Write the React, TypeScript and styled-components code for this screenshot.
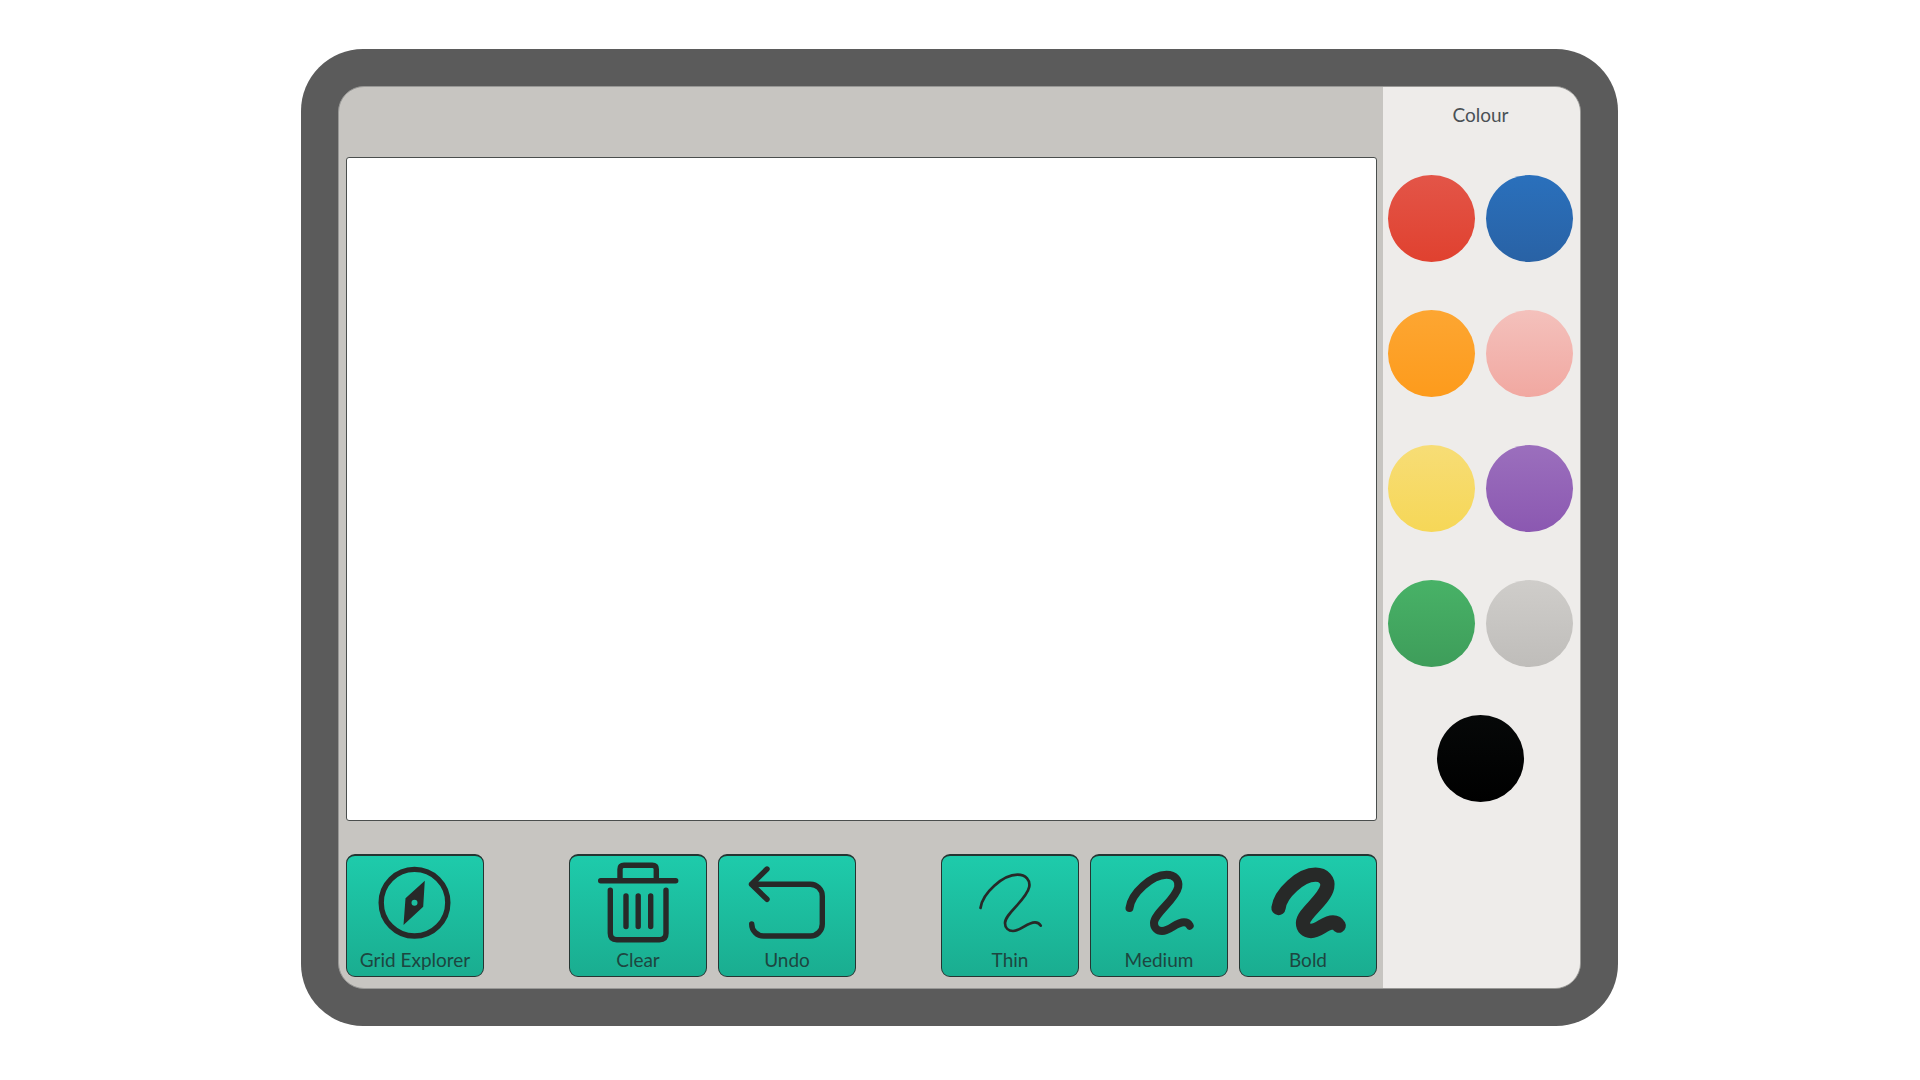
import React from "react";
import styled, { createGlobalStyle } from "styled-components";

const GlobalStyle = createGlobalStyle`
  *, *::before, *::after { box-sizing: border-box; }
  body {
    margin: 0;
    background: #fff;
    font-family: Lato, "Liberation Sans", sans-serif;
    font-size: 19px;
    line-height: 24px;
  }
`;

const Page = styled.main`
  display: flex;
  justify-content: center;
  min-height: 100vh;
  padding: 49px 25px 54px 24px;
`;

const Device = styled.div`
  display: flex;
  width: 100%;
  max-width: 1317px;
  padding: 37px;
  border-radius: 62px;
  background: #5b5b5b;
`;

const Screen = styled.div`
  display: flex;
  flex: 1;
  min-width: 0;
  overflow: hidden;
  border: 1px solid #989896;
  border-radius: 26px;
  background: #c7c5c1;
`;

const Workspace = styled.section`
  display: flex;
  flex: 1;
  flex-direction: column;
  gap: 33px;
  min-width: 0;
  padding: 70px 6px 11px 7px;
`;

const Paper = styled.div`
  flex: 1;
  min-height: 240px;
  border: 1px solid #4a4e4d;
  border-radius: 3px;
  background: #fff;
`;

const Toolbar = styled.div`
  display: flex;
  justify-content: space-between;
`;

const ToolGroup = styled.div`
  display: flex;
  gap: 11px;
`;

const Tool = styled.button`
  display: flex;
  flex-direction: column;
  align-items: center;
  width: 138px;
  padding: 0 0 4px;
  border: 1px solid #253532;
  border-top-width: 2px;
  border-radius: 9px;
  background: linear-gradient(#1ecbab, #1aad90);
  color: #1d4640;
  font: inherit;
  cursor: pointer;
`;

const Glyph = styled.svg<{ $weight?: number }>`
  display: block;
  width: 100px;
  height: 92px;
  fill: none;
  stroke: #272928;
  stroke-width: ${(p) => p.$weight ?? 5.4};
  stroke-linecap: round;
  stroke-linejoin: round;
`;

const Sidebar = styled.aside`
  flex: 0 0 197px;
  padding: 16px 7px 24px 5px;
  background: #eeecea;
`;

const Heading = styled.h2`
  margin: 0 0 48px;
  color: #4a5156;
  font-size: 19px;
  font-weight: 400;
  line-height: 24px;
  text-align: center;
`;

const Swatches = styled.div`
  display: flex;
  flex-wrap: wrap;
  justify-content: center;
  gap: 48px 11px;
`;

const Swatch = styled.button<{ $from: string; $to: string }>`
  width: 87px;
  height: 87px;
  padding: 0;
  border: 0;
  border-radius: 50%;
  background: linear-gradient(${(p) => p.$from}, ${(p) => p.$to});
  cursor: pointer;
`;

const colours = [
  { name: "Red", from: "#e35548", to: "#e0412f" },
  { name: "Blue", from: "#2a70bc", to: "#2962a5" },
  { name: "Orange", from: "#fda632", to: "#fd9b1c" },
  { name: "Pink", from: "#f4c1bc", to: "#f1a8a1" },
  { name: "Yellow", from: "#f7dd76", to: "#f6d757" },
  { name: "Purple", from: "#9b6fbd", to: "#8b58b1" },
  { name: "Green", from: "#48b267", to: "#3e9d5a" },
  { name: "Grey", from: "#cfcdca", to: "#bfbdba" },
  { name: "Black", from: "#060808", to: "#000000" },
];

const Compass = () => (
  <Glyph viewBox="0 0 100 92" aria-hidden="true">
    <circle cx="49.5" cy="46.7" r="33.3" />
    <path
      d="M59.8 24.7 58.2 50.7 38.5 69 40.5 42.3Z M49.5 43.7a3 3 0 1 0 0 6a3 3 0 1 0 0-6Z"
      fill="#272928"
      fillRule="evenodd"
      stroke="none"
    />
  </Glyph>
);

const Bin = () => (
  <Glyph viewBox="0 0 100 92" aria-hidden="true">
    <path d="M12.7 24.7H87.7 M32 24V13.3Q32 9.3 36 9.3H64.3Q68.3 9.3 68.3 13.3V24" />
    <path d="M22.3 34.3V77.2Q22.3 83.7 28.8 83.7H71.5Q78 83.7 78 77.2V34.3" />
    <path d="M38 40V70.5 M50.2 40V70.5 M62.7 40V70.5" />
  </Glyph>
);

const UndoArrow = () => (
  <Glyph viewBox="0 0 100 92" aria-hidden="true">
    <path d="M30 13 14.5 28.2 30 43.3 M14.5 28.2H73.3A12 12 0 0 1 85.3 40.2V68A12 12 0 0 1 73.3 80H26.7A12 12 0 0 1 14.7 68" />
  </Glyph>
);

const Squiggle = ({ weight }: { weight: number }) => (
  <Glyph viewBox="0 0 100 92" $weight={weight} aria-hidden="true">
    <path d="M20.5 52C22.5 37 43 18.7 57.5 18.7C66 18.7 70.5 24.5 69.2 31C66.5 44 45 57.5 45 67C45 72 48.5 75 53 75C61 75 67 66.3 75 66.3C77.5 66.3 79.5 67.5 80.7 69.7" />
  </Glyph>
);

export default function App() {
  return (
    <>
      <GlobalStyle />
      <Page>
        <Device>
          <Screen>
            <Workspace>
              <Paper />
              <Toolbar>
                <ToolGroup>
                  <Tool type="button"><Compass />Grid Explorer</Tool>
                </ToolGroup>
                <ToolGroup>
                  <Tool type="button"><Bin />Clear</Tool>
                  <Tool type="button"><UndoArrow />Undo</Tool>
                </ToolGroup>
                <ToolGroup>
                  <Tool type="button"><Squiggle weight={2.7} />Thin</Tool>
                  <Tool type="button"><Squiggle weight={8} />Medium</Tool>
                  <Tool type="button"><Squiggle weight={14.3} />Bold</Tool>
                </ToolGroup>
              </Toolbar>
            </Workspace>
            <Sidebar>
              <Heading>Colour</Heading>
              <Swatches>
                {colours.map((c) => (
                  <Swatch key={c.name} type="button" aria-label={c.name} $from={c.from} $to={c.to} />
                ))}
              </Swatches>
            </Sidebar>
          </Screen>
        </Device>
      </Page>
    </>
  );
}
